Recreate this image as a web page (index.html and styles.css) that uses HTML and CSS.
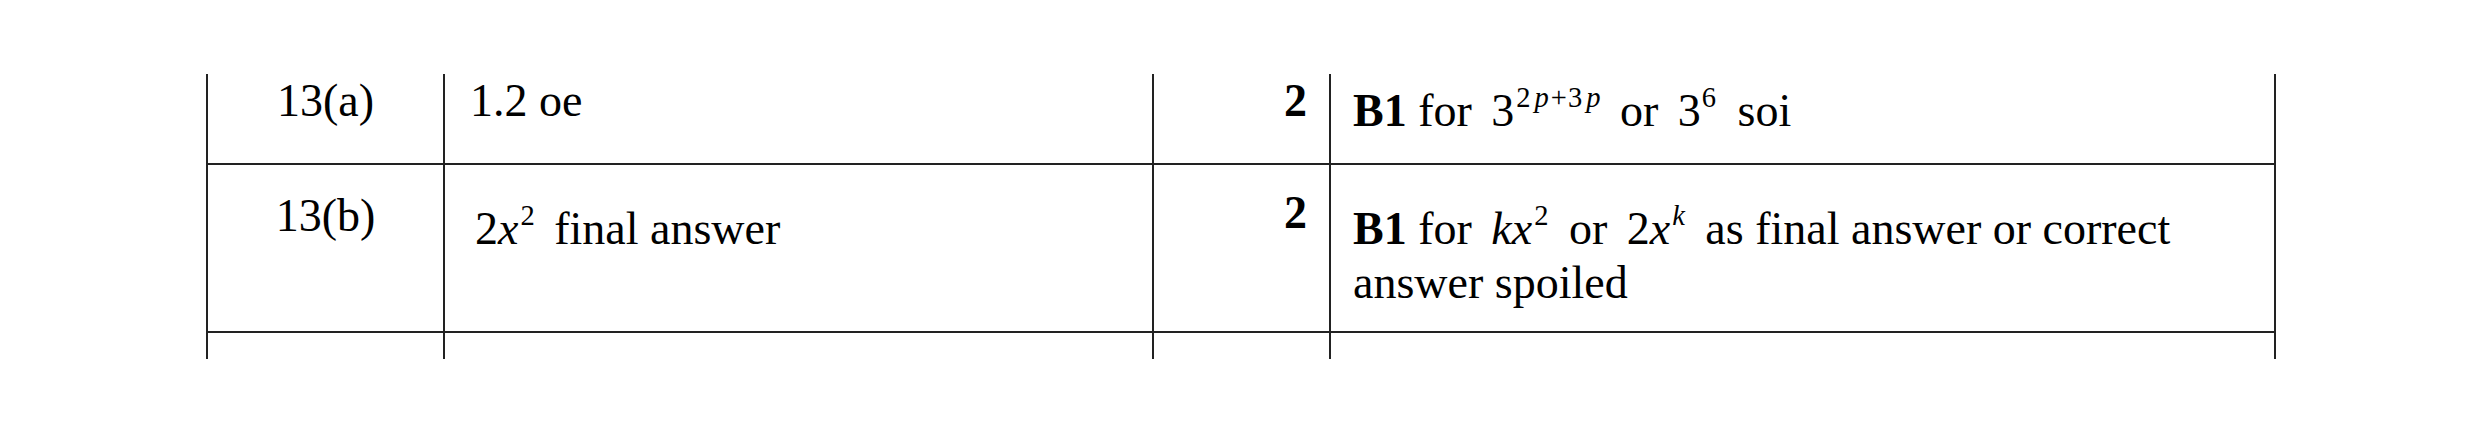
FILE: index.html
```html
<!DOCTYPE html>
<html lang="en">
<head>
<meta charset="utf-8">
<title>Mark scheme</title>
<link rel="stylesheet" href="styles.css">
</head>
<body>
<div class="sheet">
  <div class="grid">
    <div class="cell q r1">13(a)</div>
    <div class="cell ans r1">1.2 oe</div>
    <div class="cell mark r1">2</div>
    <div class="cell guid r1 r1-guid"><b>B1</b> for <span class="m">3<sup class="wide">2<i>p</i><span class="op">+</span>3<i>p</i></sup></span> or <span class="m">3<sup class="six">6</sup></span> soi</div>

    <div class="cell q r2">13(b)</div>
    <div class="cell ans r2 r2-low"><span class="m m-first">2<i>x</i><sup>2</sup></span> final answer</div>
    <div class="cell mark r2 r2-mark">2</div>
    <div class="cell guid r2 r2-low"><b>B1</b> for <span class="m"><i>kx</i><sup class="tail">2</sup></span> or <span class="m">2<i>x</i><sup class="tail"><i>k</i></sup></span> as final answer or correct<br>answer spoiled</div>

    <div class="cell r3"></div>
    <div class="cell r3"></div>
    <div class="cell r3"></div>
    <div class="cell r3"></div>
  </div>
</div>
</body>
</html>
```

FILE: styles.css
```css
html, body {
  margin: 0;
  background: #ffffff;
}

body {
  font-family: "Liberation Serif", "Times New Roman", serif;
  color: #000000;
}

.sheet {
  padding: 74px 0 0 206px;
}

.grid {
  display: grid;
  grid-template-columns: 237px 709px 177px 945px;
  grid-template-rows: 91px 168px 26px;
  width: max-content;
  border-right: 2px solid #222222;
}

.cell {
  box-sizing: border-box;
  border-left: 2px solid #222222;
  border-bottom: 2px solid #222222;
  font-size: 46px;
  line-height: 54px;
  white-space: nowrap;
}

.r3 {
  border-bottom: none;
}

.q {
  text-align: center;
}

.ans {
  padding-left: 25px;
}

.mark {
  text-align: right;
  padding-right: 22px;
  font-weight: bold;
}

.guid {
  padding-left: 22px;
}

.r1 {
  padding-top: 0;
}

.r1-guid {
  padding-top: 10px;
}

.r2 {
  padding-top: 24px;
}

.r2-mark {
  padding-top: 21px;
}

.r2-low {
  padding-top: 37px;
}

.m {
  margin: 0 8px;
}

.m-first {
  margin-left: 5px;
}

.m i,
sup i {
  font-style: italic;
}

sup {
  font-size: 0.62em;
  line-height: 0;
  vertical-align: 0.68em;
  margin-left: 2px;
}

sup.wide i {
  margin-left: 4px;
}

sup.wide .op {
  margin: 0 1px 0 2px;
}

sup.six {
  margin-left: 1px;
  margin-right: 2px;
}

sup.tail {
  margin-right: 1px;
}
```
